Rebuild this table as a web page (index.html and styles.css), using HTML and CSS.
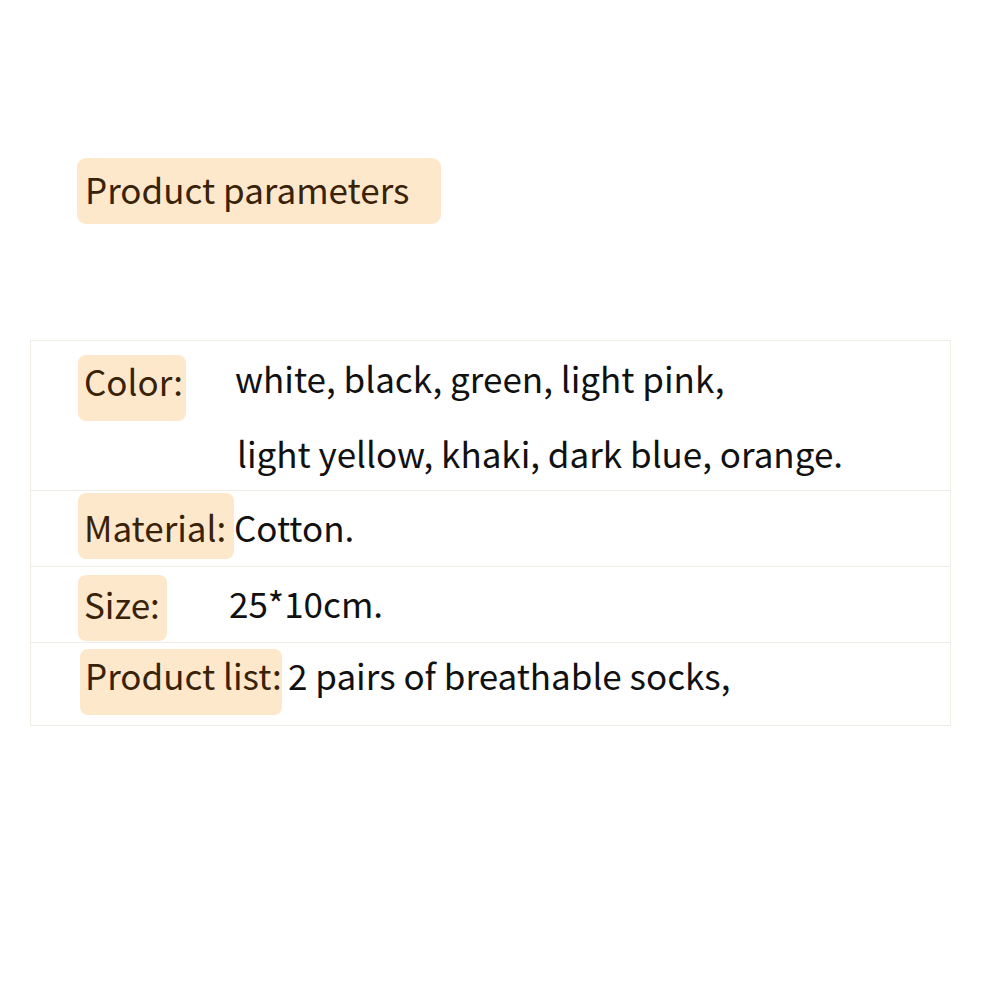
FILE: index.html
```html
<!DOCTYPE html>
<html>
<head>
<meta charset="utf-8">
<link rel="stylesheet" href="styles.css">
</head>
<body>
<div class="page">
  <div class="title-wrap"><span class="title">Product parameters</span></div>
  <div class="table">
    <div class="row row-color">
      <span class="label label-color">Color:</span>
      <div class="value value-color">
        <div class="line">white, black, green, light pink,</div>
        <div class="line line2">light yellow, khaki, dark blue, orange.</div>
      </div>
    </div>
    <div class="row row-material">
      <span class="label label-material">Material:</span>
      <span class="value">Cotton.</span>
    </div>
    <div class="row row-size">
      <span class="label label-size">Size:</span>
      <span class="value value-size">25*10cm.</span>
    </div>
    <div class="row row-list">
      <span class="label label-list">Product list:</span>
      <span class="value value-list">2 pairs of breathable socks,</span>
    </div>
  </div>
</div>
</body>
</html>
```

FILE: styles.css
```css
html, body {
  margin: 0;
  padding: 0;
  background: #ffffff;
}
.page {
  width: 1001px;
  height: 1001px;
  font-family: "Noto Sans CJK SC", "Noto Sans", sans-serif;
  font-size: 35px;
  color: #111111;
}
.title-wrap {
  padding: 158px 0 0 77px;
  height: 66px;
  display: flex;
}
.title {
  display: flex;
  align-items: center;
  background: #fde8cc;
  border-radius: 9px;
  color: #3a2208;
  width: 364px;
  box-sizing: border-box;
  height: 66px;
  padding: 0 0 5px 8px;
  line-height: 1;
}
.table {
  margin: 116px 0 0 30px;
  width: 919px;
  border: 1px solid #f1ece6;
}
.row {
  display: flex;
  align-items: center;
  border-top: 1px solid #f1ece6;
  padding-left: 47px;
}
.row:first-child {
  border-top: none;
}
.label {
  display: flex;
  align-items: center;
  align-self: flex-start;
  background: #fde8cc;
  border-radius: 8px;
  color: #3a2208;
  height: 66px;
  line-height: 1;
  padding: 0 0 5px 6px;
  box-sizing: border-box;
  flex-shrink: 0;
}
.value {
  line-height: 1;
  padding-bottom: 5px;
}
.row-color {
  height: 149px;
  align-items: flex-start;
}
.label-color {
  margin-top: 14px;
  width: 108px;
  padding-bottom: 16px;
}
.value-color {
  margin-left: 49px;
  padding-top: 19px;
}
.line2 {
  margin-top: 40px;
  margin-left: 2px;
}
.row-material {
  height: 75px;
}
.label-material {
  margin-top: 2px;
  width: 156px;
  padding-bottom: 0;
}
.row-size {
  height: 75px;
}
.label-size {
  margin-top: 8px;
  width: 89px;
  padding-bottom: 9px;
}
.value-size {
  margin-left: 62px;
  padding-bottom: 4px;
}
.row-list {
  height: 82px;
  padding-left: 49px;
}
.label-list {
  margin-top: 6px;
  width: 202px;
  padding-left: 5px;
  padding-bottom: 15px;
}
.value-list {
  margin-left: 6px;
  padding-bottom: 19px;
}
```
